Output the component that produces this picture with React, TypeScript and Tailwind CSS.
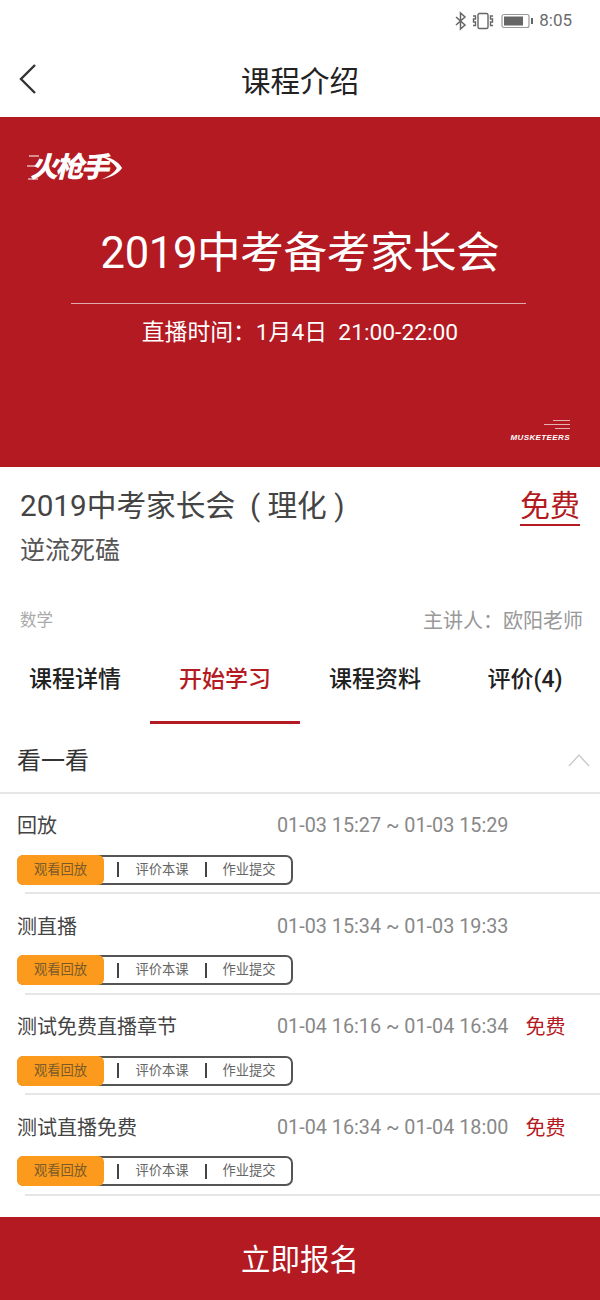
const cjk = "font-['Roboto','Noto_Sans_CJK_SC',sans-serif]";

const lessons = [
  { title: "回放", time: "01-03 15:27 ~ 01-03 15:29", free: false },
  { title: "测直播", time: "01-03 15:34 ~ 01-03 19:33", free: false },
  { title: "测试免费直播章节", time: "01-04 16:16 ~ 01-04 16:34", free: true },
  { title: "测试直播免费", time: "01-04 16:34 ~ 01-04 18:00", free: true },
];

const tabs = ["课程详情", "开始学习", "课程资料", "评价(4)"];

function StatusBar() {
  return (
    <div className="h-[41px] flex items-center justify-end pr-[28px] text-[#6b6b6b]">
      {/* bluetooth */}
      <svg width="14" height="20" viewBox="0 0 14 18" fill="none" stroke="#666" strokeWidth="1.5" className="mr-[1px]">
        <path d="M2 5l9 8-4.500 4V1L11 5l-9 8" />
      </svg>
      {/* vibrate */}
      <svg width="24" height="18" viewBox="0 0 24 18" fill="none" stroke="#666" strokeWidth="1.4" className="ml-[2px]">
        <rect x="7" y="1.500" width="10" height="15" rx="1.500" />
        <path d="M2 4h2.500v3H2.500v3h2v3.500H2M22 4h-2.500v3h2v3h-2v3.500H22" />
      </svg>
      {/* battery */}
      <svg width="33" height="16" viewBox="0 0 33 16" className="ml-[6px]">
        <rect x="1" y="1.500" width="27" height="13" rx="2" fill="none" stroke="#999" strokeWidth="1.200" />
        <rect x="3" y="3.500" width="19" height="9" fill="#666" />
        <rect x="30" y="5" width="2" height="6" fill="#666" />
      </svg>
      <span className="ml-[5px] text-[17px] font-['Roboto',sans-serif]">8:05</span>
    </div>
  );
}

function NavBar() {
  return (
    <div className="relative h-[76px] flex items-center justify-center">
      <svg width="20" height="32" viewBox="0 0 20 32" fill="none" stroke="#333" strokeWidth="2.400" className="absolute left-[18px] top-[22px]">
        <path d="M17 2L3 16l14 14" />
      </svg>
      <span className="text-[29.500px] text-[#222] mt-[7px]">课程介绍</span>
    </div>
  );
}

function Banner() {
  return (
    <div className="h-[350px] bg-[#b31a22] flex flex-col text-white">
      <div className="h-[41px] mt-[30px] pl-[27px] flex items-center">
        {/* speed lines */}
        <svg width="12" height="26" viewBox="0 0 12 26" className="shrink-0 -mr-[9px]" stroke="white" strokeWidth="1">
          <path d="M2 1h10M0 11h8M1 24h10" />
        </svg>
        <span className="italic font-black text-[28px] leading-[30px] tracking-[-2.500px]">火枪手</span>
        <svg width="23" height="28" viewBox="0 0 26 28" fill="white" className="-ml-[7px] shrink-0">
          <path d="M1 1C12 1 21 7 25 14 20 21 11 25 1 27 9 24 16 20 19 14 15 8 9 4 1 1z" />
        </svg>
      </div>
      <div className="text-center text-[43.500px] leading-[56px] mt-[38px] tracking-[-0.3px]">2019中考备考家长会</div>
      <div className="ml-[71px] mr-[74px] mt-[21px] border-t border-[#e0a9ab]" />
      <div className="text-center text-[22.800px] leading-[30px] mt-[14px]">直播时间：1月4日&nbsp;&nbsp;21:00-22:00</div>
      <div className="flex-1 flex flex-col items-end justify-end pr-[30px] pb-[24px]">
        <div className="flex flex-col items-end gap-[3px] mb-[4px]">
          <div className="h-[1px] w-[17px] bg-[#e8b0b2]" />
          <div className="h-[1px] w-[26px] bg-[#e8b0b2]" />
          <div className="h-[1px] w-[15px] bg-[#e8b0b2]" />
        </div>
        <span className="italic font-black text-[8px] leading-[10px] tracking-[0.4px] font-['Liberation_Sans',sans-serif]">MUSKETEERS</span>
      </div>
    </div>
  );
}

function CourseInfo() {
  return (
    <div className="h-[183px] pl-[20px] pr-[17px] flex flex-col">
      <div className="flex justify-between items-start pt-[21px]">
        <span className="text-[29.700px] leading-[36px] text-[#444]">2019中考家长会&nbsp;&nbsp;(&nbsp;理化&nbsp;)</span>
        <span className="text-[30px] leading-[36px] text-[#b31a22] border-b-2 border-[#b31a22] mr-[3px]">免费</span>
      </div>
      <div className="text-[25px] leading-[32px] text-[#555] mt-[9px]">逆流死磕</div>
      <div className="flex justify-between items-center mt-[39px]">
        <span className="text-[16.500px] text-[#aaa]">数学</span>
        <span className="text-[20px] text-[#999]">主讲人：欧阳老师</span>
      </div>
    </div>
  );
}

function Tabs() {
  return (
    <div className="h-[74px] grid grid-cols-4">
      {tabs.map((tab, idx) => (
        <div
          key={tab}
          className={`flex items-start justify-center pt-[13px] text-[23px] leading-[34px] font-medium ${
            idx === 1 ? "text-[#b31a22] border-b-[3px] border-[#b31a22]" : "text-[#222]"
          }`}
        >
          {tab}
        </div>
      ))}
    </div>
  );
}

function LessonRow({ title, time, free }: { title: string; time: string; free: boolean }) {
  return (
    <div className="h-[100.500px] pl-[17px] flex flex-col">
      <div className="flex items-center h-[30px] mt-[17px]">
        <span className="w-[260px] text-[20px] text-[#444]">{title}</span>
        <span className="text-[19.800px] text-[#888] font-['Roboto',sans-serif]">{time}</span>
        {free && <span className="ml-[17px] text-[20px] text-[#b31a22]">免费</span>}
      </div>
      <div className="w-[276px] h-[30px] mt-[13.500px] flex items-center border-2 border-[#555] rounded-[7px] text-[13.300px] text-[#666]">
        <span className="-ml-[2px] w-[87px] h-[30px] bg-[#fb9a1c] rounded-[6px] text-[#7a5a2a] flex items-center justify-center shrink-0">观看回放</span>
        <span className="w-[2px] h-[15px] bg-[#444] ml-[13px] shrink-0" />
        <span className="w-[86px] text-center shrink-0">评价本课</span>
        <span className="w-[2px] h-[15px] bg-[#444] shrink-0" />
        <span className="flex-1 text-center">作业提交</span>
      </div>
      <div className="ml-[8px] mt-[7.500px] border-t-2 border-[#e6e6e6]" />
    </div>
  );
}

export default function App() {
  return (
    <div className={`w-[600px] h-[1300px] bg-white flex flex-col overflow-hidden ${cjk}`}>
      <StatusBar />
      <NavBar />
      <Banner />
      <CourseInfo />
      <Tabs />
      <div className="h-[70px] pl-[17px] pr-[10px] pt-[6px] flex items-center justify-between border-b-2 border-[#e6e6e6]">
        <span className="text-[24px] text-[#333]">看一看</span>
        <svg width="22" height="14" viewBox="0 0 22 14" fill="none" stroke="#ccc" strokeWidth="1.500" className="-mt-[2px]">
          <path d="M1 13L11 2l10 11" />
        </svg>
      </div>
      {lessons.map((lesson) => (
        <LessonRow key={lesson.title} {...lesson} />
      ))}
      <div className="flex-1" />
      <div className="h-[83px] bg-[#b31a22] text-white text-[29.500px] pt-[4px] flex items-center justify-center">立即报名</div>
    </div>
  );
}
